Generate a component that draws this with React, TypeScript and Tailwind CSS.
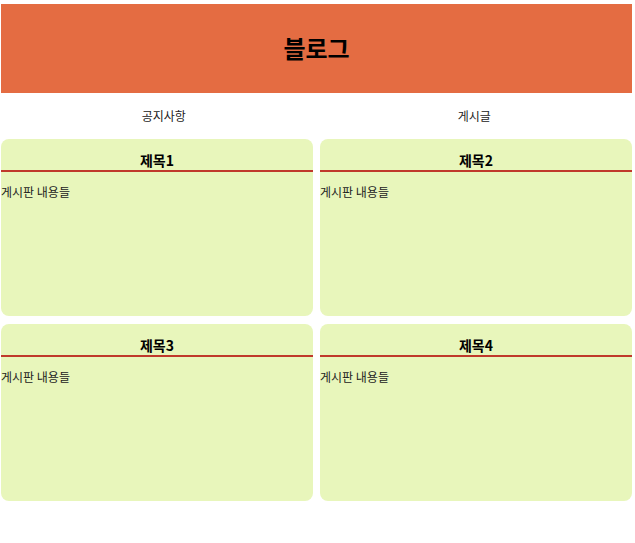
const posts = [
  { title: "제목1", body: "게시판 내용들" },
  { title: "제목2", body: "게시판 내용들" },
  { title: "제목3", body: "게시판 내용들" },
  { title: "제목4", body: "게시판 내용들" },
];

export default function App() {
  return (
    <div
      className="w-[631px] ml-[1px] pt-[4px] bg-white text-black"
      style={{ fontFamily: '"Noto Sans CJK KR", "Noto Sans", sans-serif' }}
    >
      {/* Header */}
      <header className="h-[89px] bg-[#e46c42] flex items-center justify-center">
        <h1 className="text-[24px] font-bold leading-none pb-[1px]">블로그</h1>
      </header>

      {/* Nav */}
      <nav className="h-[46px] grid grid-cols-2 items-center text-[12px] text-[#222]">
        <span className="text-center pl-[10px]">공지사항</span>
        <span className="text-center">게시글</span>
      </nav>

      {/* Posts */}
      <div className="grid grid-cols-2 gap-x-[7px] gap-y-[8px]">
        {posts.map((p) => (
          <div key={p.title} className="h-[177px] bg-[#e8f6bb] rounded-[8px]">
            <div className="h-[33px] flex items-end justify-center pb-[3px] border-b-2 border-[#c0392b]">
              <h2 className="text-[14px] font-bold leading-none">{p.title}</h2>
            </div>
            <p className="mt-[14px] text-[12px] leading-none text-[#222]">{p.body}</p>
          </div>
        ))}
      </div>
    </div>
  );
}
